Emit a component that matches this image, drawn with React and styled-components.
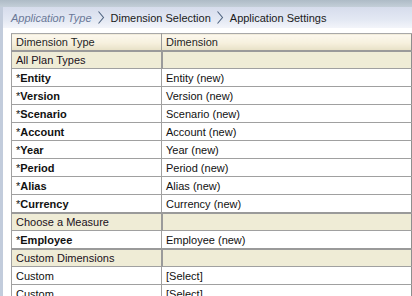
import React from 'react';
import styled, { createGlobalStyle } from 'styled-components';

const GlobalStyle = createGlobalStyle`
  html, body {
    margin: 0;
    padding: 0;
    background: #ffffff;
  }
  body {
    font-family: Tahoma, "Liberation Sans", Arial, sans-serif;
    font-size: 11px;
    color: #000;
  }
`;

const steps = [
  { label: 'Application Type', done: true },
  { label: 'Dimension Selection' },
  { label: 'Application Settings' },
];

const rows = [
  { type: 'section', label: 'All Plan Types' },
  { name: 'Entity', value: 'Entity (new)', required: true },
  { name: 'Version', value: 'Version (new)', required: true },
  { name: 'Scenario', value: 'Scenario (new)', required: true },
  { name: 'Account', value: 'Account (new)', required: true },
  { name: 'Year', value: 'Year (new)', required: true },
  { name: 'Period', value: 'Period (new)', required: true },
  { name: 'Alias', value: 'Alias (new)', required: true },
  { name: 'Currency', value: 'Currency (new)', required: true },
  { type: 'section', label: 'Choose a Measure' },
  { name: 'Employee', value: 'Employee (new)', required: true },
  { type: 'section', label: 'Custom Dimensions' },
  { name: 'Custom', value: '[Select]' },
  { name: 'Custom', value: '[Select]' },
];

const Chevron = () => (
  <ChevronSvg width="8" height="15" viewBox="0 0 8 15">
    <path d="M1.5 1.5 L6.5 7.5 L1.5 13.5" fill="none" stroke="#4f6480" strokeWidth="1.1" />
  </ChevronSvg>
);

const App = () => {
  return (
    <Page>
      <GlobalStyle />
      <TopBar />
      <Body>
        <Rail />
        <Content>
          <Breadcrumb>
            {steps.map((s, i) => (
              <React.Fragment key={s.label}>
                {i > 0 && <Chevron />}
                <Step $done={s.done}>{s.label}</Step>
              </React.Fragment>
            ))}
          </Breadcrumb>
          <Grid>
            <thead>
              <tr>
                <HeadCell $first>Dimension Type</HeadCell>
                <HeadCell>Dimension</HeadCell>
              </tr>
            </thead>
            <tbody>
              {rows.map((r, i) =>
                r.type === 'section' ? (
                  <tr key={i}>
                    <SectionCell $first>{r.label}</SectionCell>
                    <SectionCell />
                  </tr>
                ) : (
                  <tr key={i}>
                    <Cell $first>
                      {r.required ? (
                        <>
                          *<Bold>{r.name}</Bold>
                        </>
                      ) : (
                        r.name
                      )}
                    </Cell>
                    <Cell>{r.value}</Cell>
                  </tr>
                )
              )}
            </tbody>
          </Grid>
        </Content>
      </Body>
    </Page>
  );
};
export default App;

const Page = styled.div`
  width: 412px;
  height: 296px;
  overflow: hidden;
  display: flex;
  flex-direction: column;
`;

const TopBar = styled.div`
  height: 7px;
  flex-shrink: 0;
  background: linear-gradient(#aebbc6, #c3ced8);
`;

const Body = styled.div`
  display: flex;
  flex: 1;
  min-height: 0;
`;

const Rail = styled.div`
  width: 3px;
  flex-shrink: 0;
  background: #c2ccdc;
`;

const Content = styled.div`
  flex: 1;
  display: flex;
  flex-direction: column;
  min-width: 0;
`;

const Breadcrumb = styled.div`
  height: 21px;
  flex-shrink: 0;
  display: flex;
  align-items: center;
  gap: 4px;
  padding-left: 8px;
  background: linear-gradient(#d6dcec, #e3e8f3 60%, #f3f5fa);
`;

const ChevronSvg = styled.svg`
  display: block;
  margin: 0 2px 0 1px;
`;

const Step = styled.span`
  font-size: 11px;
  white-space: nowrap;
  color: ${p => (p.$done ? '#6a7898' : '#1a1a1a')};
  font-style: ${p => (p.$done ? 'italic' : 'normal')};
`;

const Grid = styled.table`
  flex-shrink: 0;
  margin: 5px 0 0 8px;
  width: 401px;
  border-collapse: collapse;
  table-layout: fixed;
  border-left: 1px solid #a0a0a0;
  border-right: 1px solid #8e8e8e;
  font-size: 11px;
`;

const HeadCell = styled.th`
  width: ${p => (p.$first ? '141px' : 'auto')};
  height: 16px;
  padding: 0 4px;
  text-align: left;
  font-weight: normal;
  color: #1f1f1f;
  border-top: 1px solid #a8a8a8;
  border-bottom: 1px solid #a0a0a0;
  border-right: ${p => (p.$first ? '1px solid #9a9a9a' : 'none')};
  background: linear-gradient(#fcf8ee, #f6f0dd 55%, #e7e0c6);
`;

const SectionCell = styled.td`
  height: 16px;
  padding: 0 4px;
  color: #1a1020;
  white-space: nowrap;
  border-top: 2px solid #9a9a9a;
  border-bottom: 1px solid #a0a0a0;
  border-right: ${p => (p.$first ? '2px solid #9a9a9a' : 'none')};
  background: #efecd6;
`;

const Cell = styled.td`
  height: 17px;
  padding: 0 4px;
  color: #111;
  white-space: nowrap;
  border-bottom: 1px solid #a0a0a0;
  border-right: ${p => (p.$first ? '1px solid #a0a0a0' : 'none')};
  background: #fff;
`;

const Bold = styled.b`
  font-weight: bold;
`;
